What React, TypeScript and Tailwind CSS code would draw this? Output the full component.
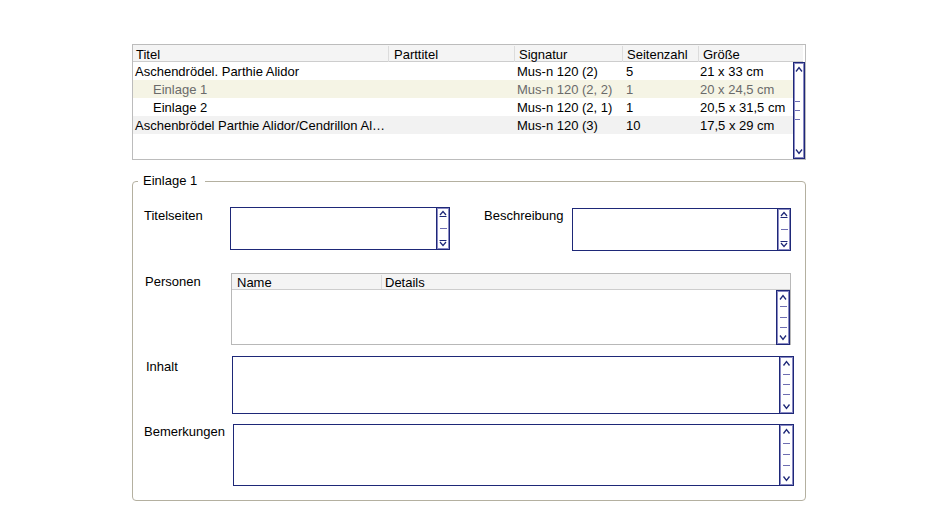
import React from "react";

const NAVY = "#1e2878";
const LAV = "#8a8ac4";

function Scrollbar({ w, h, dashes, small, leftDash }: { w: number; h: number; dashes: number[]; small?: boolean; leftDash?: boolean }) {
  const cx = w / 2;
  return (
    <svg width={w} height={h} className="block shrink-0">
      <rect x={0.5} y={0.5} width={w - 1} height={h - 1} fill="#ffffff" stroke={NAVY} />
      <rect x={1.5} y={1.5} width={w - 3} height={h - 3} fill="none" stroke={LAV} />
      {small ? (
        <>
          <path d={`M${cx - 3} ${8} L${cx} ${4.5} L${cx + 3} ${8}`} fill="none" stroke={NAVY} strokeWidth={1.2} />
          <path d={`M${cx - 3.5} 9.5 H${cx + 3.5}`} stroke={NAVY} />
          <path d={`M${cx - 3.5} ${h - 9.5} H${cx + 3.5}`} stroke={NAVY} />
          <path d={`M${cx - 3} ${h - 8} L${cx} ${h - 4.5} L${cx + 3} ${h - 8}`} fill="none" stroke={NAVY} strokeWidth={1.2} />
        </>
      ) : (
        <>
          <path d={`M${cx - 3} ${9.5} L${cx} ${5.5} L${cx + 3} ${9.5}`} fill="none" stroke={NAVY} strokeWidth={1.3} />
          <path d={`M${cx - 3} ${h - 9.5} L${cx} ${h - 5.5} L${cx + 3} ${h - 9.5}`} fill="none" stroke={NAVY} strokeWidth={1.3} />
        </>
      )}
      {dashes.map((y, i) => (
        <rect
          key={i}
          x={leftDash ? 2 : Math.round(cx - 3.5)}
          y={y}
          width={leftDash ? Math.round(cx - 1) : 7}
          height={1}
          fill="#6e6eb2"
        />
      ))}
    </svg>
  );
}

const rows = [
  { t: "Aschendrödel. Parthie Alidor", ind: false, sig: "Mus-n 120 (2)", s: "5", g: "21 x 33 cm", bg: "bg-white", c: "text-black" },
  { t: "Einlage 1", ind: true, sig: "Mus-n 120 (2, 2)", s: "1", g: "20 x 24,5 cm", bg: "bg-[#f5f4e5]", c: "text-[#6a6a6a]" },
  { t: "Einlage 2", ind: true, sig: "Mus-n 120 (2, 1)", s: "1", g: "20,5 x 31,5 cm", bg: "bg-white", c: "text-black" },
  { t: "Aschenbrödel Parthie Alidor/Cendrillon Al…", ind: false, sig: "Mus-n 120 (3)", s: "10", g: "17,5 x 29 cm", bg: "bg-[#f2f2f2]", c: "text-black" },
];

function TextBox({ w, h, sbw, dashes, small }: { w: number; h: number; sbw: number; dashes: number[]; small?: boolean }) {
  return (
    <div className="flex border border-[#1e2878] bg-white" style={{ width: w, height: h }}>
      <div className="flex-1" />
      <div className="-my-px -mr-px">
        <Scrollbar w={sbw} h={h} dashes={dashes} small={small} />
      </div>
    </div>
  );
}

export default function App() {
  return (
    <div
      className="w-[928px] h-[514px] bg-white pl-[132px] pt-[44px] text-[13px] leading-[16px] text-black"
      style={{ fontFamily: '"Liberation Sans", Arial, sans-serif' }}
    >
      {/* Top table */}
      <div className="w-[674px] h-[116px] border border-[#bcbcbc] flex flex-col">
        <div className="grid grid-cols-[255px_126px_108px_76px_1fr] h-[17px] bg-[#f4f4f4] border-b border-[#cdcdcd] mr-[2px]">
          <div className="pl-[3px] pt-[2px] leading-[15px]">Titel</div>
          <div className="pl-[5px] border-l border-[#dcdcdc] mt-[1px] pt-[1px] leading-[15px]">Parttitel</div>
          <div className="pl-[4px] border-l border-[#dcdcdc] mt-[1px] pt-[1px] leading-[15px]">Signatur</div>
          <div className="pl-[4px] border-l border-[#dcdcdc] mt-[1px] pt-[1px] leading-[15px]">Seitenzahl</div>
          <div className="pl-[4px] border-l border-[#dcdcdc] mt-[1px] pt-[1px] leading-[15px]">Größe</div>
        </div>
        <div className="flex flex-1">
          <div className="w-[660px] flex flex-col">
            {rows.map((r, i) => (
              <div key={i} className={`grid grid-cols-[255px_126px_108px_76px_1fr] h-[18px] pt-[1px] leading-[17px] ${r.bg} ${r.c}`}>
                <div className={`${r.ind ? "pl-[20px]" : "pl-[2px]"} whitespace-nowrap overflow-hidden`}>{r.t}</div>
                <div />
                <div className="pl-[3px] whitespace-nowrap">{r.sig}</div>
                <div className="pl-[4px]">{r.s}</div>
                <div className="pl-[2px] whitespace-nowrap">{r.g}</div>
              </div>
            ))}
          </div>
          <Scrollbar w={12} h={97} dashes={[39, 48, 57]} leftDash />
        </div>
      </div>

      {/* Fieldset */}
      <fieldset className="w-[674px] mt-[13px] border border-[#b4b0a0] rounded-[4px] px-[11px] pb-[14px]">
        <legend className="-ml-[6px] pl-[5px] pr-[8px] leading-[16px]">Einlage 1</legend>

        <div className="flex mt-[18px] h-[44px]">
          <div className="w-[86px] pt-[1px]">Titelseiten</div>
          <TextBox w={220} h={43} sbw={14} dashes={[21]} small />
          <div className="w-[88px] ml-[34px] pt-[1px]">Beschreibung</div>
          <div className="mt-[1px]">
            <TextBox w={219} h={43} sbw={14} dashes={[21]} small />
          </div>
        </div>

        <div className="flex mt-[22px]">
          <div className="w-[86px] ml-[1px] pt-[1px]">Personen</div>
          <div className="w-[560px] h-[72px] border border-[#b8b8b8] flex flex-col">
            <div className="h-[16px] bg-[#f4f4f4] border-b border-[#cdcdcd] flex leading-[15px] pt-[1px]">
              <div className="w-[149px] pl-[5px]">Name</div>
              <div className="pl-[3px] border-l border-[#dcdcdc]">Details</div>
            </div>
            <div className="flex flex-1 justify-end">
              <Scrollbar w={14} h={55} dashes={[16, 27, 37]} />
            </div>
          </div>
        </div>

        <div className="flex mt-[11px]">
          <div className="w-[86px] ml-[2px] pt-[3px]">Inhalt</div>
          <TextBox w={562} h={58} sbw={15} dashes={[18, 28, 38]} />
        </div>

        <div className="flex mt-[10px]">
          <div className="w-[89px]">Bemerkungen</div>
          <TextBox w={561} h={62} sbw={15} dashes={[19, 30, 41]} />
        </div>
      </fieldset>
    </div>
  );
}
